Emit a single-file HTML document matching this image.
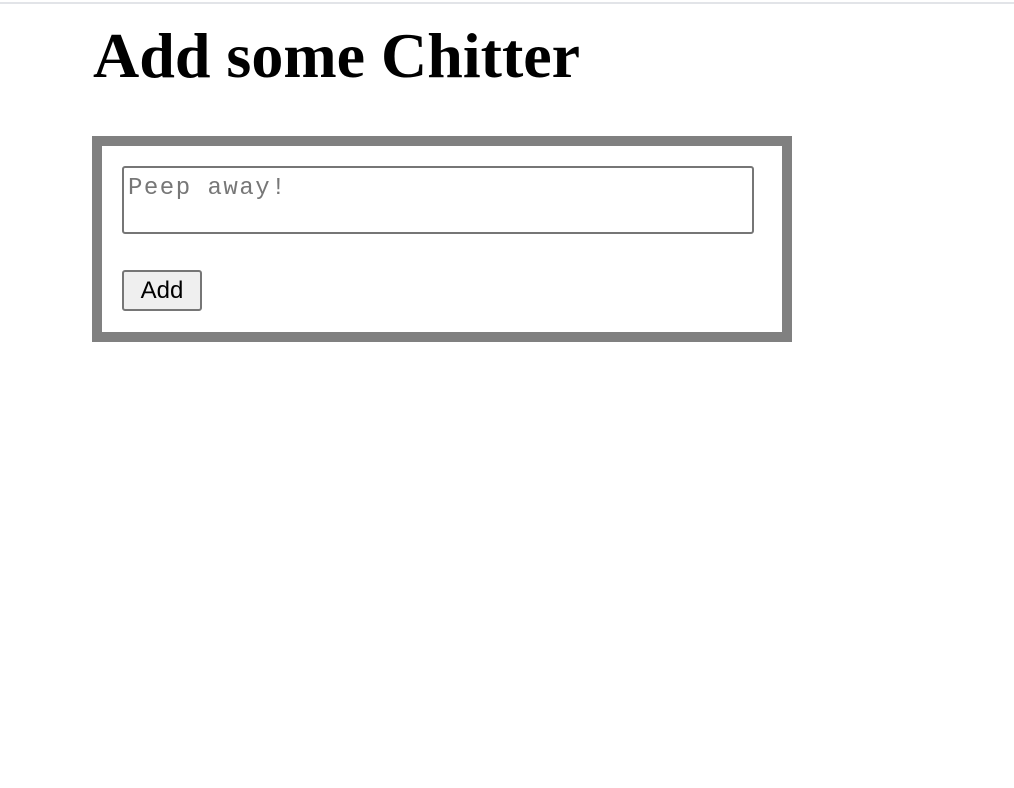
<!DOCTYPE html>
<html><head><style>
body{margin:0;background:#fff;width:1014px;height:788px;position:relative;overflow:hidden}
.top{position:absolute;left:0;top:2px;width:1014px;height:2px;background:#e2e4e8}
h1{position:absolute;left:93px;top:19px;margin:0;font:bold 64px "Liberation Serif",serif;color:#000;white-space:nowrap}
.box{position:absolute;left:92px;top:136px;width:680px;height:186px;border:10px solid #808080;background:#fff}
.ta{position:absolute;left:20px;top:20px;width:628px;height:64px;border:2px solid #767676;border-radius:3px}
.ta span{position:absolute;left:4px;top:7px;font:24px "Liberation Mono",monospace;letter-spacing:1.5px;color:#777}
.btn{position:absolute;left:20px;top:124px;width:76px;height:37px;border:2px solid #767676;border-radius:3px;background:#efefef;font:24px "Liberation Sans",sans-serif;text-align:center;line-height:37px;color:#000}
</style></head><body>
<div class="top"></div>
<h1>Add some Chitter</h1>
<div class="box">
<div class="ta"><span>Peep away!</span></div>
<div class="btn">Add</div>
</div>
</body></html>
